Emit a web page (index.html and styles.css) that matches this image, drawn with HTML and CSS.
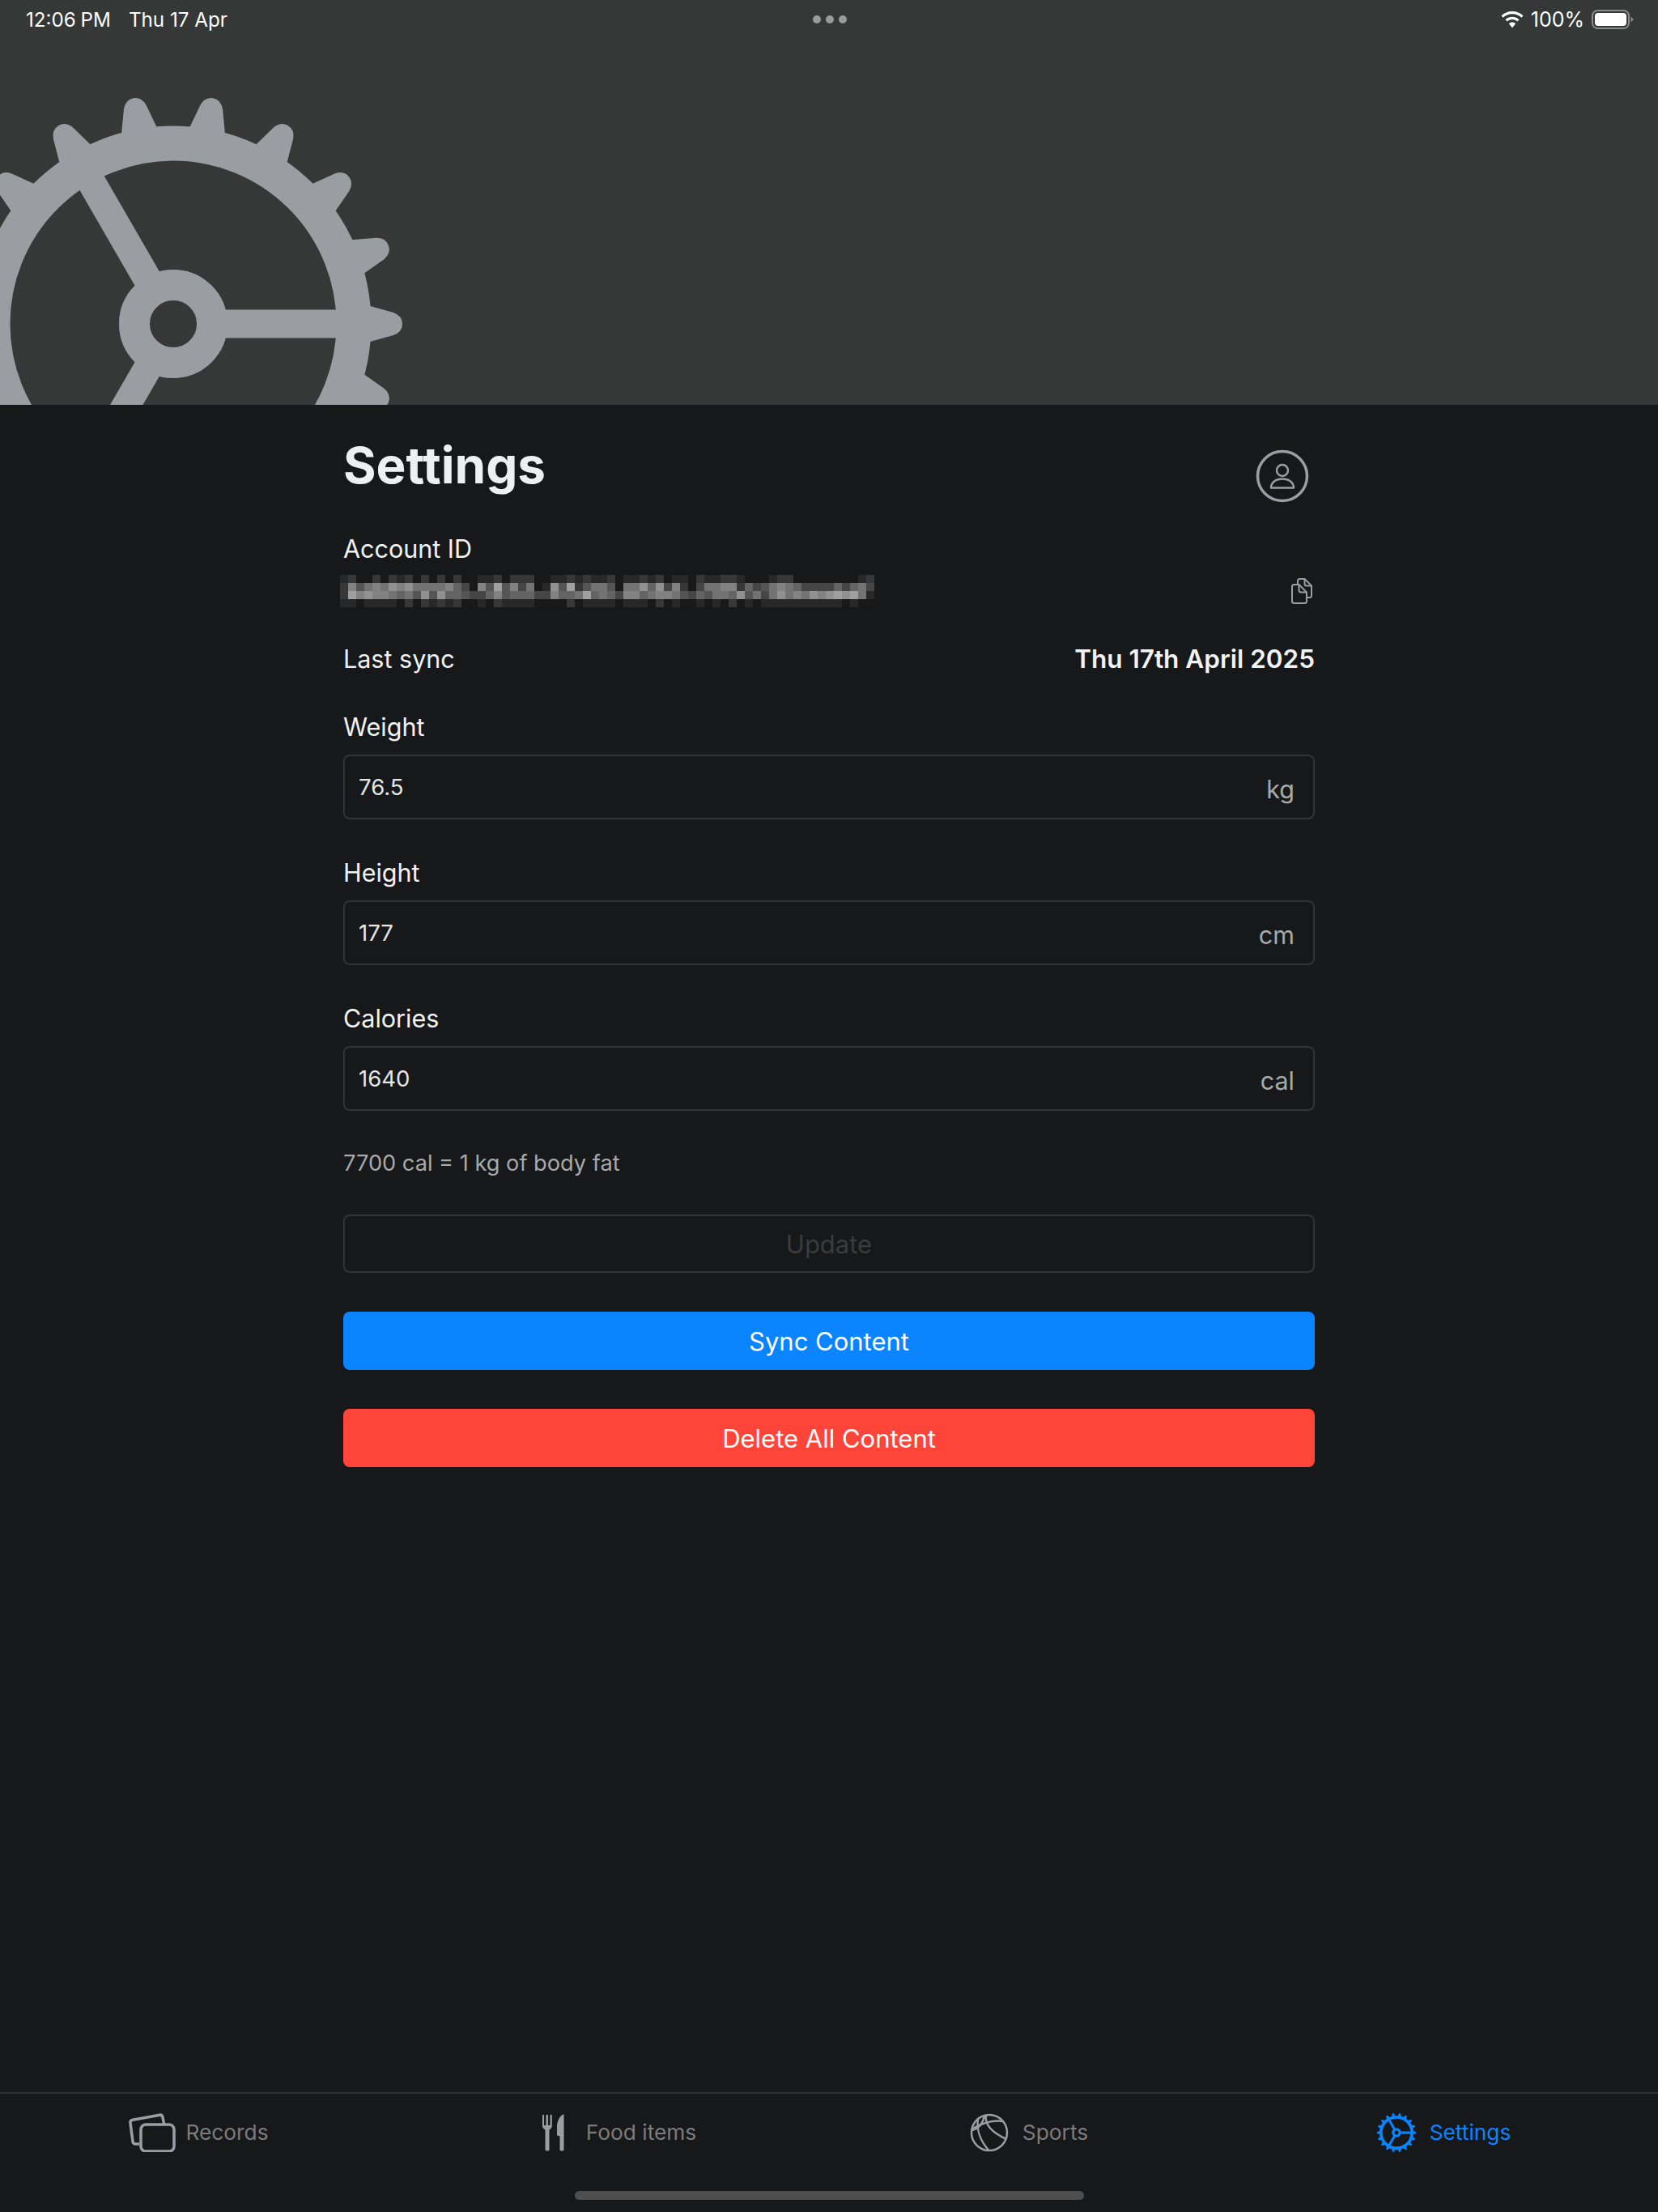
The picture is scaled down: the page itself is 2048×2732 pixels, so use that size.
FILE: index.html
```html
<!DOCTYPE html>
<html lang="en">
<head>
    <meta charset="UTF-8">
    <title>Settings</title>
    <meta name="viewport" content="width=device-width, initial-scale=1.0">
    <link rel="stylesheet" href="styles.css">
</head>
<body>

<svg class="defs" width="0" height="0">
    <defs>
        <path id="tooth" d="M236 -24L272 -14Q283 -10 283 0Q283 10 272 14L236 24Z"/>
        <g id="gear">
            <circle r="223" fill="none" stroke="currentColor" stroke-width="43"/>
            <circle r="48" fill="none" stroke="currentColor" stroke-width="38"/>
            <path id="spoke" d="M60 -17.500H225V17.500H60Z"/>
            <use href="#spoke" transform="rotate(120)"/>
            <use href="#spoke" transform="rotate(240)"/>
            <use href="#tooth"/>
            <use href="#tooth" transform="rotate(20)"/>
            <use href="#tooth" transform="rotate(40)"/>
            <use href="#tooth" transform="rotate(60)"/>
            <use href="#tooth" transform="rotate(80)"/>
            <use href="#tooth" transform="rotate(100)"/>
            <use href="#tooth" transform="rotate(120)"/>
            <use href="#tooth" transform="rotate(140)"/>
            <use href="#tooth" transform="rotate(160)"/>
            <use href="#tooth" transform="rotate(180)"/>
            <use href="#tooth" transform="rotate(200)"/>
            <use href="#tooth" transform="rotate(220)"/>
            <use href="#tooth" transform="rotate(240)"/>
            <use href="#tooth" transform="rotate(260)"/>
            <use href="#tooth" transform="rotate(280)"/>
            <use href="#tooth" transform="rotate(300)"/>
            <use href="#tooth" transform="rotate(320)"/>
            <use href="#tooth" transform="rotate(340)"/>
        </g>
    </defs>
</svg>

<div class="page">
    <header class="banner">
        <div class="status-bar">
            <div class="status-left">
                <span class="status-time">12:06 PM</span>
                <span>Thu 17 Apr</span>
            </div>
            <div class="status-dots"><i></i><i></i><i></i></div>
            <div class="status-right">
                <svg class="wifi" width="28" height="21" viewBox="0 0 28 21">
                    <path d="M14 0C8.800 0 4.100 2 .5 5.400L2.700 7.800C5.600 5 9.600 3.300 14 3.300S22.400 5 25.300 7.800L27.500 5.400C23.900 2 19.200 0 14 0Z"/>
                    <path d="M14 6.800C10.700 6.800 7.700 8.100 5.500 10.200L7.700 12.600C9.300 11.100 11.500 10.100 14 10.100S18.700 11.100 20.300 12.600L22.500 10.200C20.300 8.100 17.300 6.800 14 6.800Z"/>
                    <path d="M14 13.600C12.400 13.600 11 14.200 9.900 15.200L14 20.500L18.100 15.200C17 14.200 15.600 13.600 14 13.600Z"/>
                </svg>
                <span>100%</span>
                <svg class="battery" width="52" height="24" viewBox="0 0 52 24">
                    <rect x="1" y="1" width="45" height="22" rx="6.500" fill="none" stroke="#8a8b8b" stroke-width="2"/>
                    <rect x="4" y="4" width="39" height="16" rx="4" fill="#fff"/>
                    <path d="M48.500 8.500L52 12L48.500 15.500Z" fill="#8a8b8b"/>
                </svg>
            </div>
        </div>
        <svg class="banner-gear" width="520" height="400" viewBox="0 100 520 400">
            <use href="#gear" transform="translate(214 400)"/>
        </svg>
    </header>

    <main class="content">
        <div class="title-row">
            <h1>Settings</h1>
            <svg class="profile-icon" width="68" height="68" viewBox="0 0 68 68" fill="none" stroke="currentColor">
                <circle cx="34" cy="34" r="30.500" stroke-width="3.500"/>
                <circle cx="34" cy="27" r="7" stroke-width="2.500"/>
                <path d="M20 48.500C20 41.500 26 37.500 34 37.500S48 41.500 48 48.500Z" stroke-width="2.500" stroke-linejoin="round"/>
            </svg>
        </div>

        <div class="label account-label">Account ID</div>
        <div class="account-row">
            <svg id="account-pixels" class="account-pixels" width="660" height="40" viewBox="0 0 66 4" shape-rendering="crispEdges"></svg>
            <svg class="copy-icon" width="26" height="32" viewBox="0 0 26 32" fill="none" stroke="currentColor" stroke-width="2" stroke-linejoin="round">
                <path d="M8 8V3.500C8 2 9 1 10.500 1H16.500L25 9.500V21.500C25 23 24 24 22.500 24H19.500"/>
                <path d="M16.500 1V7C16.500 8.500 17.500 9.500 19 9.500H25"/>
                <path d="M1 10.500C1 9 2 8 3.500 8H9.500L19 17.500V28.500C19 30 18 31 16.500 31H3.500C2 31 1 30 1 28.500Z"/>
                <path d="M9.500 8V15C9.500 16.500 10.500 17.500 12 17.500H19"/>
            </svg>
        </div>

        <div class="sync-row">
            <span class="label">Last sync</span>
            <span class="sync-date">Thu 17th April 2025</span>
        </div>

        <div class="field first-field">
            <div class="label">Weight</div>
            <div class="input-box"><span>76.5</span><span class="unit">kg</span></div>
        </div>
        <div class="field">
            <div class="label">Height</div>
            <div class="input-box"><span>177</span><span class="unit">cm</span></div>
        </div>
        <div class="field">
            <div class="label">Calories</div>
            <div class="input-box"><span>1640</span><span class="unit">cal</span></div>
        </div>

        <p class="note">7700 cal = 1 kg of body fat</p>

        <button class="btn btn-update" disabled>Update</button>
        <button class="btn btn-sync">Sync Content</button>
        <button class="btn btn-delete">Delete All Content</button>
    </main>

    <footer class="tab-bar">
        <nav class="tabs">
            <a class="tab tab-records">
                <svg width="58" height="48" viewBox="0 0 58 48" fill="none" stroke="currentColor" stroke-width="3.500">
                    <rect x="15" y="14" width="41" height="33" rx="6"/>
                    <path d="M13 38H8.500C6.500 38 5.300 37 5 35L2 12C1.700 10 2.800 8.500 4.800 8.200L38 2.200C40 1.800 41.500 3 42 5L43.500 13"/>
                </svg>
                <span>Records</span>
            </a>
            <a class="tab tab-food">
                <svg width="27" height="46" viewBox="0 0 27 46" fill="currentColor">
                    <path d="M0 1.500C0 .5 2 .5 2 1.500V14H4.500V1.500C4.500 .5 7 .5 7 1.500V14H9.500V1.500C9.500 .5 11.800 .5 11.800 1.500V15C11.800 17.500 9.500 18.500 8.500 19.500V44C8.500 46 3.500 46 3.500 44V19.500C2.500 18.500 0 17.500 0 15Z"/>
                    <path d="M26.500 1V44C26.500 46 21.500 46 21.500 44V27H19.500C18.500 27 18 26.300 18 25V16C18 8 22 2.500 25 .8C25.800 .4 26.500 .4 26.500 1Z"/>
                </svg>
                <span>Food items</span>
            </a>
            <a class="tab tab-sports">
                <svg width="48" height="48" viewBox="0 0 48 48" fill="none" stroke="currentColor" stroke-width="2.500">
                    <circle cx="24" cy="24" r="22"/>
                    <path d="M3 21C10 19 16 13 18 3.500"/>
                    <path d="M10 7.500C8 20 13 34 23 45.500"/>
                    <path d="M20 3C18 15 28 24 45 32"/>
                    <path d="M3.500 19C14 13 28 8 41 10"/>
                </svg>
                <span>Sports</span>
            </a>
            <a class="tab tab-settings">
                <svg width="50" height="50" viewBox="-290 -290 580 580"><use href="#gear"/></svg>
                <span>Settings</span>
            </a>
        </nav>
        <div class="home-indicator"></div>
    </footer>
</div>

<script src="pixels.js"></script>
</body>
</html>
```

FILE: styles.css
```css
* {
    box-sizing: border-box;
}
html, body {
    margin: 0;
    padding: 0;
}
body {
    font-family: Inter, "Noto Sans", sans-serif;
    background: #17181a;
    color: #f2f2f3;
}
.defs {
    display: block;
}
#gear, #tooth, #spoke {
    fill: currentColor;
}
.page {
    display: flex;
    flex-direction: column;
    height: 2732px;
    overflow: hidden;
}

/* top banner */
.banner {
    height: 500px;
    background: #363837;
    overflow: hidden;
    flex-shrink: 0;
}
.status-bar {
    display: grid;
    grid-template-columns: 1fr auto 1fr;
    align-items: center;
    height: 48px;
    padding: 0 30px 0 32px;
    margin-bottom: 52px;
    font-size: 25px;
    color: #fff;
}
.status-left {
    display: flex;
    gap: 22px;
    font-size: 24.200px;
}
.status-time {
    word-spacing: -1px;
}
.status-dots {
    display: flex;
    gap: 6px;
}
.status-dots i {
    width: 10px;
    height: 10px;
    border-radius: 50%;
    background: #9a9b9b;
}
.status-right {
    display: flex;
    justify-content: flex-end;
    align-items: center;
    gap: 9px;
}
.wifi {
    fill: #fff;
}
.banner-gear {
    display: block;
    color: #9a9ea3;
}

/* settings form */
.content {
    flex: 1;
    width: 1200px;
    margin: 0 auto;
    padding-top: 39px;
}
.title-row {
    display: flex;
    justify-content: space-between;
    align-items: flex-start;
    padding-right: 6px;
}
h1 {
    margin: 0;
    font-size: 62px;
    line-height: 72px;
    font-weight: 700;
    color: #eeeff1;
}
.profile-icon {
    margin-top: 15px;
    color: #9a9ea3;
}
.label {
    font-size: 30.500px;
    line-height: 36px;
    color: #f2f2f3;
}
.account-label {
    margin-top: 38px;
}
.account-row {
    display: flex;
    justify-content: space-between;
    align-items: center;
    height: 40px;
    margin-top: 14px;
    margin-left: -4px;
    padding-right: 3px;
}
.copy-icon {
    color: #9a9ea3;
}
.sync-row {
    display: flex;
    justify-content: space-between;
    margin-top: 46px;
    line-height: 36px;
}
.sync-date {
    font-size: 31.500px;
    font-weight: 600;
    color: #f2f2f3;
}
.field {
    margin-top: 48px;
}
.input-box {
    display: flex;
    justify-content: space-between;
    align-items: center;
    height: 80px;
    margin-top: 16px;
    padding: 0 23px 0 17px;
    border: 2px solid #333436;
    border-radius: 8px;
    font-size: 27.500px;
    color: #e6e6e7;
}
.unit {
    font-size: 30.500px;
    color: #a8a9ab;
    margin-top: 4px;
}
.note {
    margin: 48px 0 0;
    font-size: 27.200px;
    line-height: 34px;
    color: #a8a9ab;
}
.btn {
    display: block;
    width: 100%;
    height: 72px;
    margin-top: 48px;
    border: none;
    border-radius: 8px;
    font-family: inherit;
    font-size: 31px;
    color: #fff;
}
.btn-update {
    margin-top: 46px;
    background: transparent;
    border: 2px solid #333436;
    color: #3a3b3d;
}
.btn-sync {
    background: #0a84ff;
}
.btn-delete {
    background: #ff453a;
}

/* bottom tabs */
.tab-bar {
    flex-shrink: 0;
    height: 148px;
    border-top: 2px solid #2e2f31;
}
.tabs {
    display: grid;
    grid-template-columns: repeat(4, 1fr);
    height: 120px;
}
.tab {
    display: flex;
    justify-content: center;
    align-items: center;
    gap: 12px;
    padding-right: 21px;
    margin-bottom: 25px;
    font-size: 26.300px;
    color: #7b7c7e;
}
.tab svg {
    color: #9a9ea3;
}
.tab-food {
    padding-right: 6px;
    gap: 27px;
}
.tab-sports {
    gap: 17px;
    padding-right: 18px;
}
.tab-settings {
    gap: 16px;
    padding-right: 18px;
    color: #0a84ff;
}
.tab-settings svg {
    color: #0a84ff;
}
.home-indicator {
    width: 629px;
    height: 11px;
    margin: 0 auto;
    border-radius: 6px;
    background: #4e4e4e;
}
```

FILE: pixels.js
```js
// the account id is pixelated in the screenshot, one hex digit per 10px block
var rows = [
    "231131323131313112231333112232322" + "312232312213223321112331111111123",
    "38578798977778641" + "85a58471295a3577" + "517796948314778836457876444464674",
    "3a8988767595966544685666448667a67" + "6488678875465776957479787989a9a72",
    "221222213132323112132222111131222" + "212221312112121312122222222221211"
];

var svg = document.getElementById("account-pixels");
rows.forEach(function (row, y) {
    row.split("").forEach(function (c, x) {
        var v = parseInt(c, 16) * 15 + 10;
        var rect = document.createElementNS("http://www.w3.org/2000/svg", "rect");
        rect.setAttribute("x", x);
        rect.setAttribute("y", y);
        rect.setAttribute("width", 1);
        rect.setAttribute("height", 1);
        rect.setAttribute("fill", "rgb(" + v + "," + v + "," + v + ")");
        svg.appendChild(rect);
    });
});
```
